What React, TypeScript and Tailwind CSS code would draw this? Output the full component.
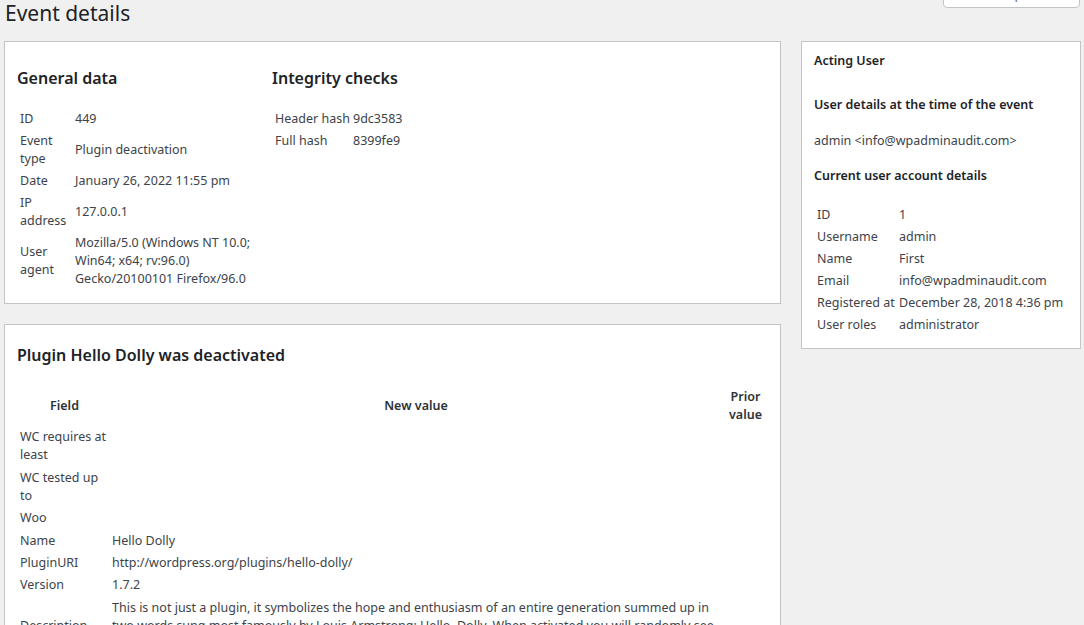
import * as React from 'react'

const font = "font-['Noto_Sans','Liberation_Sans',sans-serif]"

type Row = { label: React.ReactNode; value?: React.ReactNode }

const generalRows: Row[] = [
  { label: 'ID', value: '449' },
  {
    label: (
      <>
        Event
        <br />
        type
      </>
    ),
    value: 'Plugin deactivation',
  },
  { label: 'Date', value: 'January 26, 2022 11:55 pm' },
  {
    label: (
      <>
        IP
        <br />
        address
      </>
    ),
    value: '127.0.0.1',
  },
  {
    label: (
      <>
        User
        <br />
        agent
      </>
    ),
    value: (
      <>
        Mozilla/5.0 (Windows NT 10.0;
        <br />
        Win64; x64; rv:96.0)
        <br />
        Gecko/20100101 Firefox/96.0
      </>
    ),
  },
]

const integrityRows: Row[] = [
  { label: 'Header hash', value: '9dc3583' },
  { label: 'Full hash', value: '8399fe9' },
]

const userRows: Row[] = [
  { label: 'ID', value: '1' },
  { label: 'Username', value: 'admin' },
  { label: 'Name', value: 'First' },
  { label: 'Email', value: 'info@wpadminaudit.com' },
  { label: 'Registered at', value: 'December 28, 2018 4:36 pm' },
  { label: 'User roles', value: 'administrator' },
]

const changeRows: Row[] = [
  {
    label: (
      <>
        WC requires at
        <br />
        least
      </>
    ),
  },
  {
    label: (
      <>
        WC tested up
        <br />
        to
      </>
    ),
  },
  { label: 'Woo' },
  { label: 'Name', value: 'Hello Dolly' },
  { label: 'PluginURI', value: 'http://wordpress.org/plugins/hello-dolly/' },
  { label: 'Version', value: '1.7.2' },
  {
    label: 'Description',
    value: (
      <>
        This is not just a plugin, it symbolizes the hope and enthusiasm of an entire generation summed up in
        <br />
        two words sung most famously by Louis Armstrong: Hello, Dolly. When activated you will randomly see
        <br />a lyric from Hello, Dolly in the upper right of your admin screen on every page.
      </>
    ),
  },
]

const KeyValueTable = ({ rows, cols }: { rows: Row[]; cols: string }) => (
  <div className={`grid ${cols} items-center text-[12.5px] leading-[18px] text-[#3c434a]`}>
    {rows.map((row, i) => (
      <React.Fragment key={i}>
        <div className="py-[2px] pl-[3px] whitespace-nowrap">{row.label}</div>
        <div className="py-[2px] pl-[3px] whitespace-nowrap">{row.value}</div>
      </React.Fragment>
    ))}
  </div>
)

const Card = ({ className, children }: { className?: string; children: React.ReactNode }) => (
  <div className={`bg-white border border-[#c3c4c7] ${className ?? ''}`}>{children}</div>
)

export default function App() {
  return (
    <div className={`min-h-screen overflow-hidden bg-[#f0f0f1] pl-[4px] ${font}`}>
      <div className="flex h-[41px] items-start">
        <h1 className="pl-[1px] -mt-[2px] text-[21px] leading-[30px] font-normal text-[#1d2327]">
          Event details
        </h1>
        {/* screen options tab, mostly scrolled off the top */}
        <div className="ml-auto mr-[4px] -mt-[23px] h-[31px] w-[137px] rounded-b-[4px] border border-[#c3c4c7] bg-white pt-[8px] text-center text-[13px] leading-[16px] text-[#646970]">
          Screen Options ▾
        </div>
      </div>

      <div className="flex items-start gap-[20px]">
        <div className="flex w-[777px] flex-col gap-[20px]">
          <Card className="px-[12px] pt-[25px] pb-[13px]">
            <div className="flex">
              <div className="w-[255px]">
                <h2 className="text-[16px] leading-[22px] font-semibold text-[#1d2327]">General data</h2>
                <div className="mt-[19px]">
                  <KeyValueTable rows={generalRows} cols="grid-cols-[55px_1fr]" />
                </div>
              </div>
              <div className="flex-1">
                <h2 className="text-[16px] leading-[22px] font-semibold text-[#1d2327]">Integrity checks</h2>
                <div className="mt-[19px] w-[160px]">
                  <KeyValueTable rows={integrityRows} cols="grid-cols-[78px_1fr]" />
                </div>
              </div>
            </div>
          </Card>

          <Card className="h-[320px] px-[12px] pt-[19px]">
            <h2 className="text-[16px] leading-[22px] font-semibold text-[#1d2327]">
              Plugin Hello Dolly was deactivated
            </h2>
            <div className="mt-[20px] grid grid-cols-[92px_611px_48px] items-center gap-y-[0.4px] text-[12.5px] leading-[18px] text-[#3c434a]">
              <div className="py-[2px] pl-[3px] text-center font-semibold text-[#2c3338]">Field</div>
              <div className="py-[2px] pl-[3px] text-center font-semibold text-[#2c3338]">New value</div>
              <div className="py-[2px] pl-[3px] text-center font-semibold text-[#2c3338]">
                Prior
                <br />
                value
              </div>
              {changeRows.map((row, i) => (
                <React.Fragment key={i}>
                  <div className="py-[2px] pl-[3px] whitespace-nowrap">{row.label}</div>
                  <div className="py-[2px] pl-[3px] whitespace-nowrap">{row.value}</div>
                  <div className="py-[2px] pl-[3px]" />
                </React.Fragment>
              ))}
            </div>
          </Card>
        </div>

        <Card className="w-[280px] px-[12px] pt-[10px] pb-[12px]">
          <div className="text-[12.5px] leading-[18px] text-[#3c434a]">
            <h2 className="font-semibold text-[#1d2327]">Acting User</h2>
            <h3 className="mt-[26px] font-semibold text-[#1d2327]">User details at the time of the event</h3>
            <p className="mt-[18px]">admin &lt;info@wpadminaudit.com&gt;</p>
            <h3 className="mt-[17px] font-semibold text-[#1d2327]">Current user account details</h3>
          </div>
          <div className="mt-[19px]">
            <KeyValueTable rows={userRows} cols="grid-cols-[82px_1fr]" />
          </div>
        </Card>
      </div>
    </div>
  )
}
